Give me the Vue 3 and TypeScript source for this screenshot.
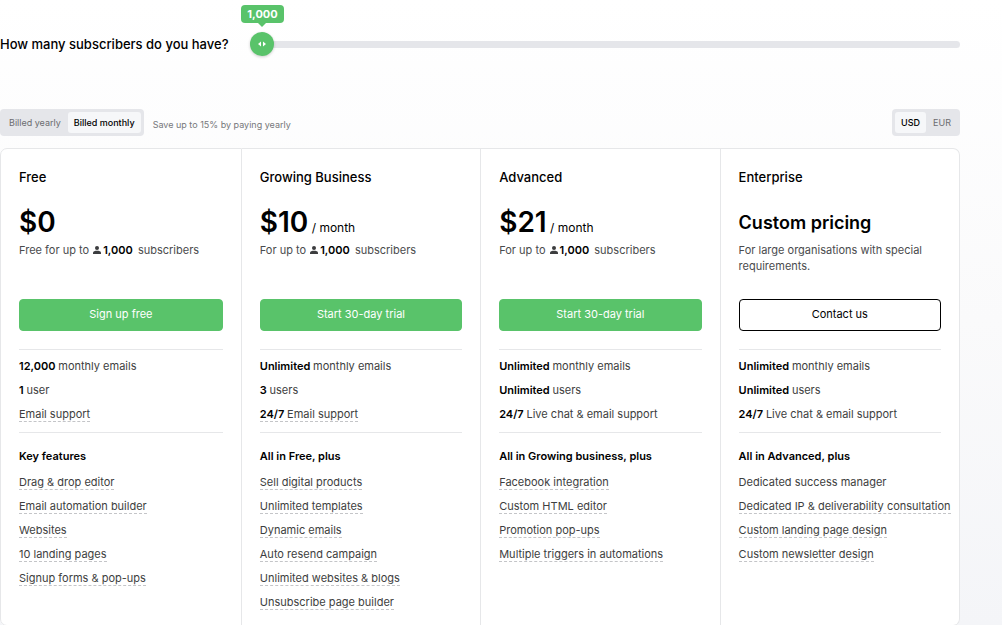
<script setup lang="ts">
import { computed, ref } from 'vue'

interface Feature {
  strong?: string
  text: string
  hint?: boolean
}

interface Plan {
  name: string
  prices: Record<Currency, string> | null
  lead: string
  action: string
  limits: Feature[]
  heading: string
  features: Feature[]
}

type Currency = 'USD' | 'EUR'
type Billing = 'yearly' | 'monthly'

const tiers: number[] = [1000, 2500, 5000, 10000, 20000, 50000, 100000]
const tier = ref<number>(0)
const billing = ref<Billing>('monthly')
const currency = ref<Currency>('USD')

const subscribers = computed<string>(() => tiers[tier.value].toLocaleString('en-US'))
const progress = computed<number>(() => tier.value / (tiers.length - 1))

const currencies: Currency[] = ['USD', 'EUR']
const periods: { value: Billing; label: string }[] = [
  { value: 'yearly', label: 'Billed yearly' },
  { value: 'monthly', label: 'Billed monthly' },
]

const plans: Plan[] = [
  {
    name: 'Free',
    prices: { USD: '$0', EUR: '€0' },
    lead: 'Free for up to',
    action: 'Sign up free',
    limits: [
      { strong: '12,000', text: 'monthly emails' },
      { strong: '1', text: 'user' },
      { text: 'Email support', hint: true },
    ],
    heading: 'Key features',
    features: [
      { text: 'Drag & drop editor', hint: true },
      { text: 'Email automation builder', hint: true },
      { text: 'Websites', hint: true },
      { text: '10 landing pages', hint: true },
      { text: 'Signup forms & pop-ups', hint: true },
    ],
  },
  {
    name: 'Growing Business',
    prices: { USD: '$10', EUR: '€10' },
    lead: 'For up to',
    action: 'Start 30-day trial',
    limits: [
      { strong: 'Unlimited', text: 'monthly emails' },
      { strong: '3', text: 'users' },
      { strong: '24/7', text: 'Email support', hint: true },
    ],
    heading: 'All in Free, plus',
    features: [
      { text: 'Sell digital products', hint: true },
      { text: 'Unlimited templates', hint: true },
      { text: 'Dynamic emails', hint: true },
      { text: 'Auto resend campaign', hint: true },
      { text: 'Unlimited websites & blogs', hint: true },
      { text: 'Unsubscribe page builder', hint: true },
    ],
  },
  {
    name: 'Advanced',
    prices: { USD: '$21', EUR: '€21' },
    lead: 'For up to',
    action: 'Start 30-day trial',
    limits: [
      { strong: 'Unlimited', text: 'monthly emails' },
      { strong: 'Unlimited', text: 'users' },
      { strong: '24/7', text: 'Live chat & email support' },
    ],
    heading: 'All in Growing business, plus',
    features: [
      { text: 'Facebook integration', hint: true },
      { text: 'Custom HTML editor', hint: true },
      { text: 'Promotion pop-ups', hint: true },
      { text: 'Multiple triggers in automations', hint: true },
    ],
  },
  {
    name: 'Enterprise',
    prices: null,
    lead: 'For large organisations with special requirements.',
    action: 'Contact us',
    limits: [
      { strong: 'Unlimited', text: 'monthly emails' },
      { strong: 'Unlimited', text: 'users' },
      { strong: '24/7', text: 'Live chat & email support' },
    ],
    heading: 'All in Advanced, plus',
    features: [
      { text: 'Dedicated success manager' },
      { text: 'Dedicated IP & deliverability consultation', hint: true },
      { text: 'Custom landing page design', hint: true },
      { text: 'Custom newsletter design', hint: true },
    ],
  },
]
</script>

<template>
  <main class="pricing">
    <div class="volume">
      <label class="question" for="subscribers">How many subscribers do you have?</label>
      <div class="slider">
        <input
          id="subscribers"
          v-model.number="tier"
          class="range"
          type="range"
          min="0"
          :max="tiers.length - 1"
          :aria-valuetext="subscribers"
        />
        <div class="rail">
          <div class="marker" :style="{ left: progress * 100 + '%' }">
            <output class="bubble" for="subscribers">{{ subscribers }}</output>
            <svg class="arrows" viewBox="0 0 12 8" aria-hidden="true">
              <path d="M5 1.5v5L2 4zM7 1.5v5L10 4z" fill="#fff" />
            </svg>
          </div>
        </div>
      </div>
    </div>

    <div class="options">
      <div class="toggle" role="group" aria-label="Billing period">
        <button
          v-for="period in periods"
          :key="period.value"
          type="button"
          :class="{ on: billing === period.value }"
          :aria-pressed="billing === period.value"
          @click="billing = period.value"
        >{{ period.label }}</button>
      </div>
      <p class="saving">Save up to 15% by paying yearly</p>
      <div class="toggle currency" role="group" aria-label="Currency">
        <button
          v-for="code in currencies"
          :key="code"
          type="button"
          :class="{ on: currency === code }"
          :aria-pressed="currency === code"
          @click="currency = code"
        >{{ code }}</button>
      </div>
    </div>

    <div class="plans">
      <section v-for="plan in plans" :key="plan.name" class="plan">
        <h2>{{ plan.name }}</h2>
        <p v-if="plan.prices" class="price">
          <span class="amount">{{ plan.prices[currency] }}</span>
          <span v-if="plan.name !== 'Free'" class="per"> / month</span>
        </p>
        <p v-else class="price custom">Custom pricing</p>
        <p class="lead">
          {{ plan.lead }}
          <span v-if="plan.prices" class="count">
            <svg class="person" viewBox="0 0 8 8" aria-hidden="true">
              <circle cx="4" cy="2" r="2" />
              <path d="M0 8V6.6C0 5.3 2 4.8 4 4.8s4 .5 4 1.8V8z" />
            </svg>
            <b>{{ subscribers }}</b>
          </span>
          <template v-if="plan.prices"> subscribers</template>
        </p>
        <button type="button" class="action" :class="{ outline: !plan.prices }">{{ plan.action }}</button>
        <ul class="list limits">
          <li v-for="item in plan.limits" :key="item.text">
            <span :class="{ hint: item.hint }"><b v-if="item.strong">{{ item.strong }}&nbsp;</b>{{ item.text }}</span>
          </li>
        </ul>
        <h3>{{ plan.heading }}</h3>
        <ul class="list">
          <li v-for="item in plan.features" :key="item.text">
            <span :class="{ hint: item.hint }">{{ item.text }}</span>
          </li>
        </ul>
      </section>
    </div>
  </main>
</template>

<style>
body {
  margin: 0;
  background: linear-gradient(180deg, #ffffff 0, #fafafb 320px, #f4f5f8 625px) no-repeat #f4f5f8;
}
</style>

<style scoped>
.pricing {
  padding: 0 42px 0 0;
  color: #000;
  font-family: Inter, "Liberation Sans", sans-serif;
  font-size: 11px;
}

h2,
h3,
p,
ul {
  margin: 0;
  padding: 0;
}

button {
  font: inherit;
  cursor: pointer;
}

.volume {
  display: flex;
  align-items: center;
  gap: 22px;
  padding-top: 32px;
}

.question {
  font-size: 13px;
  line-height: 24px;
  font-weight: 500;
}

.slider {
  position: relative;
  flex: 1;
  height: 24px;
}

.range {
  display: block;
  width: 100%;
  height: 24px;
  margin: 0;
  appearance: none;
  background: transparent;
  cursor: pointer;
}

.range::-webkit-slider-runnable-track {
  height: 7px;
  border-radius: 4px;
  background: #e5e6ea;
}

.range::-webkit-slider-thumb {
  width: 24px;
  height: 24px;
  margin-top: -9px;
  appearance: none;
  border-radius: 50%;
  background: #59c36a;
  box-shadow: 0 1px 3px rgba(0, 0, 0, 0.2);
}

.rail {
  position: absolute;
  inset: 0 12px;
  pointer-events: none;
}

.marker {
  position: absolute;
  top: 0;
  width: 0;
  height: 24px;
  display: flex;
  justify-content: center;
  align-items: center;
}

.arrows {
  flex: none;
  width: 12px;
  height: 8px;
}

.bubble {
  position: absolute;
  bottom: 33px;
  padding: 0 6px;
  border-radius: 4px;
  background: #59c36a;
  color: #fff;
  font-size: 11px;
  line-height: 18px;
  font-weight: 700;
}

.bubble::after {
  content: "";
  position: absolute;
  top: 100%;
  left: 50%;
  margin-left: -4px;
  border: 4px solid transparent;
  border-top-color: #59c36a;
  border-bottom-width: 0;
}

.options {
  display: flex;
  align-items: center;
  margin: 53px 0 12px;
}

.toggle {
  display: flex;
  gap: 1px;
  padding: 3px;
  border-radius: 4px;
  background: #e5e6ea;
}

.toggle button {
  padding: 0 6px;
  border: 0;
  border-radius: 3px;
  background: transparent;
  color: #6c6d70;
  font-size: 9px;
  line-height: 21px;
}

.toggle .on {
  background: #f6f7f9;
  color: #000;
  font-weight: 500;
}

.saving {
  margin: 4px 0 0 9px;
  color: #77787b;
  font-size: 9px;
  line-height: 14px;
}

.currency {
  margin-left: auto;
}

.plans {
  display: grid;
  grid-template-columns: 1.01fr 1fr 1fr 1fr;
  border-radius: 7px;
  background: #fff;
}

.plan {
  min-width: 0;
  padding: 18px 18px 5px;
  border: 1px solid #e6e7e9;
  border-left-width: 0;
}

.plan:first-child {
  border-left-width: 1px;
  border-radius: 7px 0 0 7px;
}

.plan:last-child {
  border-radius: 0 7px 7px 0;
}

h2 {
  font-size: 13px;
  line-height: 20px;
  font-weight: 500;
}

.price {
  height: 36px;
  margin-top: 17px;
  font-size: 12px;
  line-height: 36px;
  white-space: nowrap;
}

.amount {
  font-size: 28px;
  font-weight: 600;
}

.custom {
  font-size: 18px;
  line-height: 38px;
  font-weight: 600;
}

.lead {
  height: 48px;
  margin-top: 2px;
  color: #4a4b4d;
  line-height: 16px;
}

.count {
  margin: 0 2px 0 1px;
  white-space: nowrap;
}

.person {
  width: 8px;
  height: 8px;
  margin-right: 2px;
  fill: #3c3d3f;
}

b {
  color: #000;
  font-weight: 600;
}

.action {
  display: block;
  width: 100%;
  height: 32px;
  margin: 9px 0 18px;
  padding: 0 0 2px;
  border: 1px solid #59c36a;
  border-radius: 4px;
  background: #59c36a;
  color: #fff;
}

.outline {
  border-color: #000;
  background: #fff;
  color: #000;
}

.list {
  color: #3d3e40;
  line-height: 13px;
  list-style: none;
  white-space: nowrap;
}

.list li {
  height: 24px;
}

.limits {
  padding: 10px 0 0;
  border: solid #e6e7e9;
  border-width: 1px 0;
}

.hint {
  display: inline-block;
  border-bottom: 1px dashed #c4c5c8;
}

h3 {
  margin: 16px 0 13px;
  font-size: 11px;
  line-height: 14px;
  font-weight: 600;
}
</style>
